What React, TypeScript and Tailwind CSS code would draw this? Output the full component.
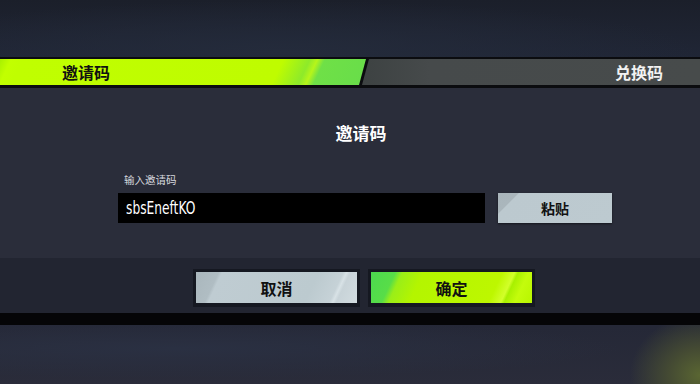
import React from "react";

const cjk = { fontFamily: '"Noto Sans CJK SC", "Noto Sans", sans-serif' };

export default function App() {
  return (
    <div
      className="relative w-[700px] h-[384px] overflow-hidden flex flex-col bg-[linear-gradient(180deg,#1b1f2a_0%,#202636_15%,#1f2330_40%,#252837_85%,#2a2c3a_100%)]"
      style={cjk}
    >
      {/* top background space */}
      <div className="h-[57px] shrink-0 bg-[radial-gradient(ellipse_at_40%_90%,#242b3b_0%,transparent_70%)]" />

      {/* tab bar */}
      <div className="h-[31px] shrink-0 bg-[#0b0c0f] pt-[2px] pb-[3px] flex">
        <div className="relative w-[366px] h-full shrink-0 [clip-path:polygon(0_0,100%_0,calc(100%_-_7px)_100%,0_100%)] bg-[linear-gradient(115deg,#a8f000_0%,#c2ff00_3%,#c0fe00_6%,#bffc00_75%,#8eea2a_82%,#b6f51a_84%,#6fe047_86%,#68dd4a_100%)] flex items-center">
          <span className="ml-[62px] text-[16px] font-bold text-[#111] leading-none">邀请码</span>
        </div>
        <div className="relative flex-1 h-full -ml-[4px] [clip-path:polygon(7px_0,100%_0,100%_100%,0_100%)] bg-[linear-gradient(90deg,#3d4242_0%,#464a4b_20%,#474b4b_100%)] flex items-center justify-end">
          <span className="mr-[37px] text-[16px] font-bold text-[#f2f2f2] leading-none">兑换码</span>
        </div>
      </div>

      {/* panel upper */}
      <div className="h-[170px] shrink-0 bg-[#2a2d3a] flex flex-col">
        <div className="mt-[33px] h-[24px] text-center text-[17px] font-bold text-white leading-[24px] pl-[22px]">
          邀请码
        </div>
        <div className="mt-[28px] h-[14px] ml-[124px] text-[10.5px] leading-[14px] text-[#d6d8de]">
          输入邀请码
        </div>
        <div className="mt-[6px] ml-[118px] flex gap-[13px]">
          <div className="w-[367px] h-[30px] bg-black flex items-center">
            <span
              className="ml-[8px] text-[17px] text-white leading-none inline-block origin-left scale-x-[0.8]"
              style={{ fontFamily: '"DejaVu Sans Condensed", "DejaVu Sans", sans-serif' }}
            >
              sbsEneftKO
            </span>
          </div>
          <div className="w-[114px] h-[30px] bg-[linear-gradient(135deg,#a9b5bb_0%,#aab6bc_14%,#bcc9cf_15%,#bdcad0_100%)] shadow-[0_1px_2px_rgba(0,0,0,0.5)] flex items-center justify-center">
            <span className="text-[14px] font-bold text-[#111] leading-none">粘贴</span>
          </div>
        </div>
      </div>

      {/* panel lower */}
      <div className="h-[55px] shrink-0 bg-[#222531] flex items-start pt-[11px] pl-[193px] gap-[8px]">
        <div className="w-[167px] h-[38px] bg-[#151821] p-[3px] pb-[4px]">
          <div className="relative w-full h-full bg-[linear-gradient(115deg,#aab7bd_0%,#b0bdc3_13%,#bfccd2_15%,#bccacf_70%,#c6d2d7_84%,#d8e2e6_86%,#c8d3d8_88%,#d2dce0_100%)] flex items-center justify-center">
            <span className="text-[16px] font-bold text-[#111] leading-none">取消</span>
          </div>
        </div>
        <div className="w-[167px] h-[38px] bg-[#151821] p-[3px] pb-[4px]">
          <div className="relative w-full h-full bg-[linear-gradient(115deg,#4cd94f_0%,#58dd48_14%,#9aee18_18%,#b4f500_30%,#bdf700_75%,#d2ff2a_82%,#a8f000_84%,#c4fc0c_90%,#b8f600_100%)] flex items-center justify-center">
            <span className="text-[16px] font-bold text-[#111] leading-none">确定</span>
          </div>
        </div>
      </div>

      {/* black bar */}
      <div className="h-[12px] shrink-0 bg-[#050507]" />

      <div className="flex-1 bg-[radial-gradient(ellipse_70px_60px_at_100%_85%,#5a6632_0%,#444a33_45%,transparent_100%),radial-gradient(ellipse_at_25%_40%,#2a3042_0%,transparent_60%)]" />
    </div>
  );
}
